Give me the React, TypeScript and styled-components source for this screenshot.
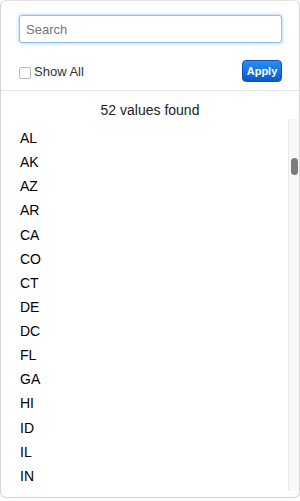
import React from "react";
import styled, { createGlobalStyle } from "styled-components";

const states = ["AL", "AK", "AZ", "AR", "CA", "CO", "CT", "DE", "DC", "FL", "GA", "HI", "ID", "IL", "IN"];

const GlobalStyle = createGlobalStyle`
  body {
    margin: 0;
    background: #ffffff;
    font-family: "Liberation Sans", Arial, sans-serif;
  }
`;

const App = () => {
  return (
    <>
      <GlobalStyle />
      <Panel>
        <Header>
          <SearchInput placeholder="Search" />
          <Controls>
            <CheckLabel>
              <Box />
              Show All
            </CheckLabel>
            <ApplyButton>Apply</ApplyButton>
          </Controls>
        </Header>
        <Count>52 values found</Count>
        <ListArea>
          <List>
            {states.map((s) => (
              <Item key={s}>{s}</Item>
            ))}
          </List>
          <Track>
            <Thumb />
          </Track>
        </ListArea>
      </Panel>
    </>
  );
};

export default App;

const Panel = styled.div`
  width: 300px;
  height: 498px;
  box-sizing: border-box;
  border: 1px solid #d4d4d4;
  border-top-color: #e2e2e2;
  border-radius: 6px;
  background: #fff;
  display: flex;
  flex-direction: column;
  padding-bottom: 6px;
  overflow: hidden;
`;

const Header = styled.div`
  padding: 14px 17px 8px 18px;
  border-bottom: 1px solid #e3e3e3;
`;

const SearchInput = styled.input`
  display: block;
  width: 100%;
  height: 28px;
  box-sizing: border-box;
  border: 1px solid #8dbff2;
  box-shadow: 0 0 3px 1px #c4def9;
  border-radius: 3px;
  padding: 0 6px;
  font-family: "Liberation Sans", Arial, sans-serif;
  font-size: 13px;
  color: #333;
  outline: none;

  ::placeholder {
    color: #a3a3a3;
  }
`;

const Controls = styled.div`
  margin-top: 17px;
  height: 22px;
  display: flex;
  align-items: center;
  justify-content: space-between;
`;

const CheckLabel = styled.label`
  display: flex;
  align-items: center;
  font-size: 13px;
  color: #333;
`;

const Box = styled.span`
  width: 10px;
  height: 10px;
  border: 1px solid #b8b8b8;
  border-radius: 2px;
  margin: 3px 3px 0 0;
  background: #fff;
`;

const ApplyButton = styled.button`
  width: 40px;
  height: 22px;
  padding: 0;
  border: 1px solid #0b52bf;
  border-radius: 4px;
  background: linear-gradient(#2a8ff0, #0658d2);
  color: #fff;
  font-family: "Liberation Sans", Arial, sans-serif;
  font-size: 11px;
  font-weight: bold;
`;

const Count = styled.div`
  padding: 10px 0 0;
  height: 28px;
  box-sizing: border-box;
  line-height: 18px;
  text-align: center;
  font-size: 14px;
  color: #222;
`;

const ListArea = styled.div`
  flex: 1;
  display: flex;
  min-height: 0;
`;

const List = styled.div`
  flex: 1;
  padding: 7px 0 0 19px;
  overflow: hidden;
`;

const Item = styled.div`
  height: 24.14px;
  line-height: 24.14px;
  font-size: 14px;
  color: #000;
`;

const Track = styled.div`
  position: relative;
  width: 10px;
  border-left: 1px solid #e6e6e6;
  background: #f8f8f8;
`;

const Thumb = styled.div`
  position: absolute;
  top: 39px;
  left: 2px;
  width: 7px;
  height: 17px;
  border-radius: 4px;
  background: #7b7b7b;
`;
